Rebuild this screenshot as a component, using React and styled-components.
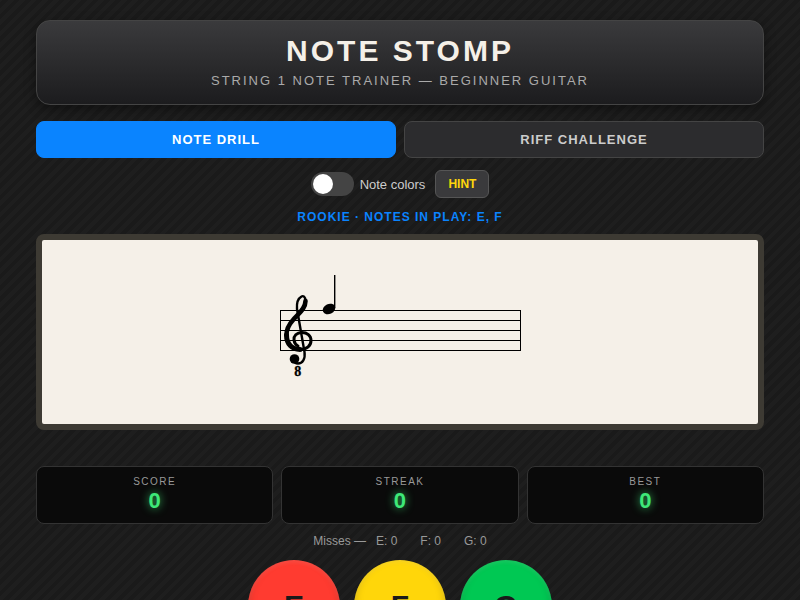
import React from "react"
import styled, { createGlobalStyle } from "styled-components"

const GlobalStyle = createGlobalStyle`
    html, body {
        margin: 0;
        padding: 0;
    }
    body {
        background-color: #1a1a1a;
        background-image: repeating-linear-gradient(
            -45deg,
            transparent 0,
            transparent 4px,
            rgba(255, 255, 255, 0.02) 4px,
            rgba(255, 255, 255, 0.02) 8px
        );
        font-family: "Liberation Sans", Arial, sans-serif;
        height: 600px;
        overflow: hidden;
    }
`

const Page = styled.div`
    display: flex;
    flex-direction: column;
    padding: 20px 36px 0;
`

const Header = styled.header`
    height: 85px;
    box-sizing: border-box;
    border: 1px solid #444;
    border-radius: 14px;
    background: linear-gradient(180deg, #3a3a3c 0%, #1c1c1e 100%);
    box-shadow: 0 4px 12px rgba(0, 0, 0, 0.4);
    text-align: center;
    padding-top: 12px;
`

const Title = styled.h1`
    margin: 0;
    font-size: 30px;
    line-height: 36px;
    font-weight: 700;
    letter-spacing: 3px;
    color: #f5f0e8;
`

const Subtitle = styled.p`
    margin: 3px 0 0;
    font-size: 13px;
    line-height: 18px;
    letter-spacing: 2px;
    color: #aaa;
`

const Tabs = styled.nav`
    display: flex;
    gap: 8px;
    margin-top: 16px;
`

const Tab = styled.button`
    flex: 1;
    height: 37px;
    box-sizing: border-box;
    padding: 0 0 1px;
    border-radius: 8px;
    border: 1px solid ${p => (p.$active ? "#0a84ff" : "#444")};
    background: ${p => (p.$active ? "#0a84ff" : "#2c2c2e")};
    color: ${p => (p.$active ? "#fff" : "#ccc")};
    font-family: inherit;
    font-size: 13px;
    font-weight: 700;
    letter-spacing: 1px;
`

const Controls = styled.div`
    display: flex;
    justify-content: center;
    align-items: center;
    gap: 10px;
    margin-top: 12px;
    height: 28px;
`

const ToggleLabel = styled.label`
    display: flex;
    align-items: center;
    gap: 6px;
    font-size: 13px;
    color: #ccc;
`

const ToggleTrack = styled.span`
    display: flex;
    align-items: center;
    width: 43px;
    height: 24px;
    box-sizing: border-box;
    padding: 0 2px;
    border-radius: 12px;
    background: #444;
`

const ToggleKnob = styled.span`
    width: 20px;
    height: 20px;
    border-radius: 50%;
    background: #fff;
`

const HintButton = styled.button`
    height: 28px;
    width: 54px;
    box-sizing: border-box;
    padding: 0;
    border: 1px solid #555;
    border-radius: 6px;
    background: #3a3a3c;
    color: #ffd60a;
    font-family: inherit;
    font-size: 12px;
    font-weight: 700;
`

const LevelText = styled.div`
    margin-top: 11px;
    text-align: center;
    font-size: 12px;
    line-height: 16px;
    font-weight: 700;
    letter-spacing: 1px;
    color: #0a84ff;
`

const StaffPanel = styled.section`
    display: flex;
    justify-content: center;
    align-items: center;
    height: 196px;
    box-sizing: border-box;
    margin-top: 9px;
    border: 6px solid #3d3a33;
    border-radius: 8px;
    background: #f5f0e8;
`

const StatsRow = styled.div`
    display: grid;
    grid-template-columns: repeat(3, 1fr);
    gap: 8px;
    margin-top: 36px;
`

const StatCard = styled.div`
    height: 58px;
    box-sizing: border-box;
    padding-top: 8px;
    border: 1px solid #333;
    border-radius: 8px;
    background: #0a0a0a;
    text-align: center;
`

const StatLabel = styled.div`
    font-size: 10px;
    line-height: 13px;
    letter-spacing: 1.5px;
    color: #999;
`

const StatValue = styled.div`
    font-size: 22px;
    line-height: 26px;
    font-weight: 700;
    color: #3ee878;
    text-shadow: 0 0 8px rgba(62, 232, 120, 0.8);
`

const Misses = styled.div`
    display: flex;
    justify-content: center;
    gap: 10px;
    margin-top: 10px;
    font-size: 12px;
    line-height: 14px;
    color: #999;
`

const MissCount = styled.span`
    margin-left: ${p => (p.$first ? "0" : "13px")};
`

const NoteButtons = styled.div`
    display: flex;
    justify-content: center;
    gap: 14px;
    margin-top: 12px;
`

const NoteButton = styled.button`
    flex: none;
    width: 92px;
    height: 92px;
    padding: 0;
    border: none;
    border-radius: 50%;
    background: ${p => p.$color};
    box-shadow: inset 0 -4px 8px rgba(0, 0, 0, 0.25), inset 0 2px 4px rgba(255, 255, 255, 0.12);
    color: #1a1a1a;
    font-family: inherit;
    font-size: 30px;
    font-weight: 700;
`

const STAFF_LINES = [310, 320, 330, 340, 350]

const StaffDrawing = () => (
    <svg width="260" height="130" viewBox="270 267 260 130">
        {STAFF_LINES.map(y => (
            <line key={y} x1="280" x2="521" y1={y + 0.5} y2={y + 0.5} stroke="#000" strokeWidth="1" />
        ))}
        <line x1="280.5" x2="280.5" y1="310" y2="351" stroke="#000" strokeWidth="1" />
        <line x1="520.5" x2="520.5" y1="310" y2="351" stroke="#000" strokeWidth="1" />

        {/* guitar clef */}
        <g fill="none" stroke="#000" strokeLinecap="round">
            <path strokeWidth="4.6" d="M305.5 301 C305.5 309 298 314 293 320 C288.5 325 286.5 330 286.5 335" />
            <path strokeWidth="5" d="M286.5 335 C286.5 344 292 349.5 300 349.5" />
            <path strokeWidth="3" d="M300 349.5 C307 349.5 311 345.5 311 340.5 C311 335.5 307 332.5 302 332.5 C296.5 332.5 293.5 336 294 340 C294.4 343 296 345 298 346" />
            <path strokeWidth="2.4" d="M305.5 301 C305.5 296.5 303 295.5 301.5 296.5 C298 298.5 296.5 303 297 309 L304.5 352 C305.5 359 302.5 363.5 298 363.5 C295.5 363.5 294 362 293.5 360" />
        </g>
        <circle cx="294.5" cy="359" r="4.8" fill="#000" />
        <text x="297.8" y="375.5" textAnchor="middle" fontFamily="Liberation Serif, serif" fontWeight="700" fontSize="14" stroke="#000" strokeWidth="0.3">8</text>

        {/* note head and stem */}
        <ellipse cx="329" cy="309" rx="6.5" ry="5" transform="rotate(-25 329 309)" fill="#000" />
        <line x1="334.7" x2="334.7" y1="275" y2="308" stroke="#000" strokeWidth="1.4" />
    </svg>
)

const STATS = [
    { label: "SCORE", value: 0 },
    { label: "STREAK", value: 0 },
    { label: "BEST", value: 0 }
]

const NOTES = [
    { name: "E", color: "#ff3b30" },
    { name: "F", color: "#ffd60a" },
    { name: "G", color: "#00c853" }
]

const App = () => (
    <Page>
        <GlobalStyle />
        <Header>
            <Title>NOTE STOMP</Title>
            <Subtitle>STRING 1 NOTE TRAINER — BEGINNER GUITAR</Subtitle>
        </Header>
        <Tabs>
            <Tab $active>NOTE DRILL</Tab>
            <Tab>RIFF CHALLENGE</Tab>
        </Tabs>
        <Controls>
            <ToggleLabel>
                <ToggleTrack><ToggleKnob /></ToggleTrack>
                Note colors
            </ToggleLabel>
            <HintButton>HINT</HintButton>
        </Controls>
        <LevelText>ROOKIE · NOTES IN PLAY: E, F</LevelText>
        <StaffPanel>
            <StaffDrawing />
        </StaffPanel>
        <StatsRow>
            {STATS.map(stat => (
                <StatCard key={stat.label}>
                    <StatLabel>{stat.label}</StatLabel>
                    <StatValue>{stat.value}</StatValue>
                </StatCard>
            ))}
        </StatsRow>
        <Misses>
            <span>Misses —</span>
            {NOTES.map((note, i) => (
                <MissCount key={note.name} $first={i === 0}>{note.name}: 0</MissCount>
            ))}
        </Misses>
        <NoteButtons>
            {NOTES.map(note => (
                <NoteButton key={note.name} $color={note.color}>{note.name}</NoteButton>
            ))}
        </NoteButtons>
    </Page>
)

export default App
